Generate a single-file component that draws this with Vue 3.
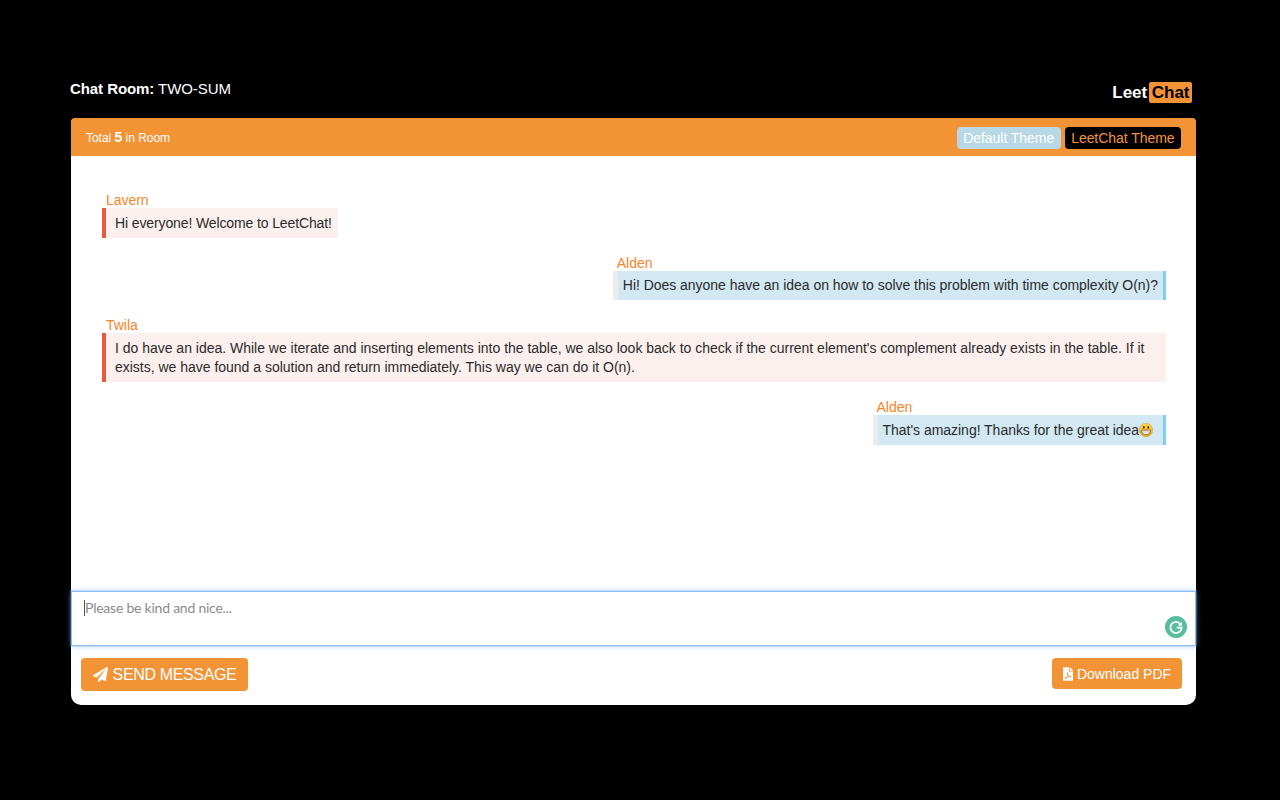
<script setup>
const total = 5
</script>

<template>
  <div class="page">
    <div class="wrap">
      <div class="top">
        <div class="room"><b>Chat Room:</b> TWO-SUM</div>
        <div class="logo">Leet<span class="logo-chat">Chat</span></div>
      </div>
      <div class="card">
        <div class="head">
          <div class="total">Total <b>{{ total }}</b> in Room</div>
          <div class="themes">
            <button class="theme theme-default">Default Theme</button>
            <button class="theme theme-leet">LeetChat Theme</button>
          </div>
        </div>
        <div class="msgs">
          <div class="msg left">
            <div class="name">Lavern</div>
            <div class="bubble tight">Hi everyone! Welcome to LeetChat!</div>
          </div>
          <div class="msg right">
            <div class="name">Alden</div>
            <div class="bubble">Hi! Does anyone have an idea on how to solve this problem with time complexity O(n)?</div>
          </div>
          <div class="msg left">
            <div class="name">Twila</div>
            <div class="bubble loose">I do have an idea. While we iterate and inserting elements into the table, we also look back to check if the current element's complement already exists in the table. If it exists, we have found a solution and return immediately. This way we can do it O(n).</div>
          </div>
          <div class="msg right">
            <div class="name">Alden</div>
            <div class="bubble">That's amazing! Thanks for the great idea<svg class="emoji" viewBox="0 0 16 16"><defs><linearGradient id="emojiFace" x1="0" y1="0" x2="0" y2="1"><stop offset="0" stop-color="#ffdc4a"/><stop offset="1" stop-color="#f0a01c"/></linearGradient></defs><circle cx="8" cy="8" r="7.6" fill="url(#emojiFace)" stroke="#c98a1c" stroke-width=".5"/><ellipse cx="5.5" cy="5" rx="1" ry="1.6" fill="#4a2f0c"/><ellipse cx="10.5" cy="5" rx="1" ry="1.6" fill="#4a2f0c"/><path d="M2.8 8.2h10.4c0 3.2-2.2 5-5.2 5s-5.2-1.8-5.2-5z" fill="#fff" stroke="#5a3b12" stroke-width=".7"/><path d="M3.2 10.3h9.6" stroke="#7a6030" stroke-width=".5"/></svg></div>
          </div>
        </div>
        <div class="input-box">
          <span class="caret"></span>
          <span class="placeholder">Please be kind and nice...</span>
          <svg class="grammarly" viewBox="0 0 22 22">
            <circle cx="11" cy="11" r="11" fill="#58bd9c"/>
            <path d="M15.6 8.2A5.6 5.6 0 1 0 16.6 11.6H11.8" fill="none" stroke="#fff" stroke-width="1.8"/>
            <path d="M16.8 5.8v4h-4z" fill="#fff"/>
          </svg>
        </div>
        <div class="foot">
          <button class="send">
            <svg class="icon-send" viewBox="0 0 512 512"><path fill="#fff" d="M476 3.2L12.5 270.6c-18.1 10.4-15.8 35.6 2.2 43.2L121 358.4l287.3-253.2c5.5-4.9 13.3 2.6 8.6 8.3L176 407v80.5c0 23.6 28.5 32.9 42.5 15.8L282 426l124.6 52.2c14.2 6 30.4-2.9 33-18.2l72-432C515 7.8 493.3-6.8 476 3.2z"/></svg>
            SEND MESSAGE
          </button>
          <button class="pdf">
            <svg class="icon-pdf" viewBox="0 0 384 512"><path fill="#fff" d="M181.9 256.1c-5-16-4.9-46.9-2-46.9 8.4 0 7.6 36.9 2 46.9zm-1.7 47.2c-7.7 20.2-17.3 43.3-28.4 62.7 18.3-7 39-17.2 62.9-21.9-12.7-9.6-24.9-23.4-34.5-40.8zM86.1 428.1c0 .8 13.2-5.4 34.9-40.2-6.7 6.3-29.1 24.5-34.9 40.2zM248 160h136v328c0 13.3-10.7 24-24 24H24c-13.3 0-24-10.7-24-24V24C0 10.7 10.7 0 24 0h200v136c0 13.2 10.8 24 24 24zm-8 171.8c-20-12.2-33.3-29-42.7-53.8 4.5-18.5 11.6-46.6 6.2-64.2-4.7-29.4-42.4-26.5-47.8-6.8-5 18.3-.4 44.1 8.1 77-11.6 27.6-28.7 64.6-40.8 85.8-.1 0-.1.1-.2.1-27.1 13.9-73.6 44.5-54.5 68 5.6 6.9 16 10 21.5 10 17.9 0 35.7-18 61.1-61.8 25.8-8.5 54.1-19.1 79-23.2 21.7 11.8 47.1 19.5 64 19.5 29.2 0 31.2-32 19.7-43.4-13.9-13.6-54.3-9.7-73.6-7.2zM377 105L279 7c-4.5-4.5-10.6-7-17-7h-6v128h128v-6.1c0-6.3-2.5-12.4-7-16.9z"/></svg>
            Download PDF
          </button>
        </div>
      </div>
    </div>
  </div>
</template>

<style scoped>
.page {
  width: 1280px;
  height: 800px;
  background: #000;
  font-family: "Liberation Sans", Arial, sans-serif;
  padding: 80px 84px 0 71px;
  box-sizing: border-box;
}
.wrap { width: 1125px; }
.top {
  display: flex;
  justify-content: space-between;
  height: 38px;
  color: #fff;
}
.room {
  font-size: 15px;
  line-height: 17px;
  margin-left: -1px;
  letter-spacing: -0.005em;
}
.logo {
  font-size: 17px;
  font-weight: 700;
  line-height: 21px;
  margin-top: 2px;
  margin-right: 4px;
  display: flex;
}
.logo-chat {
  background: #f29336;
  color: #000;
  border-radius: 2px;
  padding: 0 2.5px;
  margin-left: 2px;
  height: 21px;
}
.card {
  background: #fff;
  border-radius: 5px 5px 10px 10px;
  height: 587px;
  display: flex;
  flex-direction: column;
}
.head {
  height: 38px;
  background: #f29336;
  border-radius: 4px 4px 0 0;
  display: flex;
  justify-content: space-between;
  align-items: center;
  padding: 0 15px;
  color: #fff;
}
.total { font-size: 12px; letter-spacing: -0.03px; }
.total b { font-size: 14px; }
.themes { display: flex; gap: 4px; margin-top: 2px; }
.theme {
  font-family: inherit;
  font-size: 14px;
  letter-spacing: -0.05px;
  height: 22px;
  line-height: 22px;
  padding: 0 6.5px;
  border: 0;
  border-radius: 4px;
}
.theme-default { background: #b7d8e4; color: #fff; }
.theme-leet { background: #000; color: #f29336; }
.msgs {
  height: 435px;
  flex: none;
  padding: 35px 30px 0 31px;
  display: flex;
  flex-direction: column;
  gap: 16px;
  box-sizing: border-box;
}
.msg { display: flex; flex-direction: column; }
.msg.left { align-items: flex-start; }
.msg.right {
  align-items: flex-end;
  width: fit-content;
  align-self: flex-end;
}
.name {
  color: #f5842a;
  font-size: 14px;
  line-height: 17px;
  padding-left: 4px;
  padding-top: 1px;
  margin-bottom: -1px;
  letter-spacing: -0.03px;
}
.msg.right .name { align-self: flex-start; }
.bubble {
  font-size: 14px;
  line-height: 19.6px;
  letter-spacing: -0.03px;
  color: #2b2b2b;
  padding: 5.4px 6px 4.6px 9px;
  box-sizing: border-box;
}
.bubble.tight { letter-spacing: -0.12px; padding-top: 6px; padding-bottom: 4px; }
.bubble.loose { letter-spacing: -0.012px; }
.left .bubble {
  background: #fcf0ee;
  border-left: 4px solid #e85a3e;
}
.right .bubble {
  background: #d2e8f2;
  border-left: 5px solid #ececec;
  border-right: 3px solid #7fcdf0;
  padding-left: 5px;
  padding-right: 5px;
}
.emoji {
  width: 14px;
  height: 14px;
  vertical-align: -2px;
  margin-right: 5px;
}
.input-box {
  position: relative;
  height: 55px;
  flex: none;
  box-sizing: border-box;
  background: #fff;
  border: 1px solid #8fbdf0;
  box-shadow: 0 0 0 .5px rgba(143, 189, 240, .6), 0 0 6px rgba(120, 175, 240, .55);
  padding: 7px 12px;
  font-family: Lato, sans-serif;
  font-size: 14px;
  letter-spacing: -0.23px;
  line-height: 17px;
  color: #8c8c8c;
  display: flex;
}
.caret {
  width: 1px;
  height: 16px;
  background: #555;
  margin-top: 1px;
}
.grammarly {
  position: absolute;
  right: 8px;
  bottom: 7px;
  width: 22px;
  height: 22px;
}
.foot {
  flex: 1;
  display: flex;
  justify-content: space-between;
  align-items: flex-start;
  padding: 12px 14px 0 10px;
}
.send, .pdf {
  background: #f29336;
  color: #fff;
  border: 0;
  font-family: inherit;
  border-radius: 4px;
  display: flex;
  align-items: center;
  padding: 0;
}
.send {
  width: 167px;
  height: 33px;
  font-size: 16px;
  letter-spacing: -0.35px;
  justify-content: center;
  gap: 5px;
}
.icon-send { width: 15px; height: 15px; }
.pdf {
  width: 130px;
  height: 31px;
  font-size: 14px;
  justify-content: center;
  gap: 4px;
}
.icon-pdf { width: 10px; height: 14px; }
</style>

<style>
html, body { background: #000; }
</style>
